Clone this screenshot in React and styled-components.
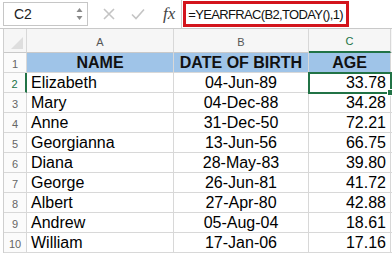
import React from "react";
import styled, { createGlobalStyle, css } from "styled-components";

const GREEN = "#217346";
const GRID = "#d8d8d8";

const GlobalStyle = createGlobalStyle`
  html, body {
    margin: 0;
    padding: 0;
    background: #fff;
    font-family: "Liberation Sans", Arial, sans-serif;
  }
`;

const Window = styled.div`
  width: 392px;
  height: 253px;
  overflow: hidden;
  background: #fff;
`;

const Toolbar = styled.div`
  display: flex;
  align-items: center;
  height: 29px;
  box-sizing: border-box;
  border-bottom: 1px solid #c9c9c9;
`;

const NameBox = styled.div`
  display: flex;
  align-items: center;
  justify-content: space-between;
  width: 85px;
  height: 24px;
  margin-left: 3px;
  box-sizing: border-box;
  border: 1px solid #c6c6c6;
  padding: 0 4px 0 10px;
  font-size: 14px;
  color: #222;
`;

const Spinner = styled.svg`
  width: 7px;
  height: 14px;
`;

const Actions = styled.div`
  display: flex;
  align-items: center;
  gap: 16px;
  padding: 0 6px 0 15px;
  height: 100%;
`;

const Fx = styled.span`
  font-family: "Liberation Serif", "Times New Roman", serif;
  font-style: italic;
  font-size: 17px;
  color: #444;
  margin-left: 2px;
`;

const FormulaField = styled.div`
  flex: 1;
  align-self: stretch;
  display: flex;
  align-items: center;
  padding-left: 1px;
  border-left: 1px solid #d0d0d0;
`;

const Highlight = styled.span`
  display: inline-flex;
  align-items: center;
  height: 26px;
  box-sizing: border-box;
  border: 3px solid #d3141c;
  padding: 0 3px 0 2px;
  font-size: 13px;
  letter-spacing: -0.65px;
  color: #111;
  white-space: nowrap;
`;

const Sheet = styled.div`
  display: grid;
  grid-template-columns: 23px 147px 135px 82px 1fr;
  grid-auto-rows: 20px;
  grid-template-rows: 24px;
  margin-left: 3px;
  border-left: 1px solid #cfcfcf;
`;

const Cell = styled.div`
  position: relative;
  box-sizing: border-box;
  border-right: 1px solid ${GRID};
  border-bottom: 1px solid ${GRID};
  font-size: 16px;
  line-height: 20px;
  color: #000;
  padding: 0 4px;
  white-space: nowrap;
  overflow: visible;
  text-align: ${(p) => p.$align || "left"};
  ${(p) =>
    p.$head &&
    css`
      background: #9fc4e8;
      font-weight: bold;
      text-align: center;
      color: #111;
    `}
  ${(p) =>
    p.$selected &&
    css`
      outline: 2px solid ${GREEN};
      outline-offset: -1px;
      z-index: 2;
      &::after {
        content: "";
        position: absolute;
        right: -4px;
        bottom: -4px;
        width: 5px;
        height: 5px;
        background: ${GREEN};
        border: 1px solid #fff;
      }
    `}
`;

const ColHead = styled.div`
  box-sizing: border-box;
  background: #f6f6f6;
  border-right: 1px solid ${GRID};
  border-bottom: ${(p) => (p.$active ? `2px solid ${GREEN}` : "1px solid #c9c9c9")};
  font-size: 11px;
  color: ${(p) => (p.$active ? GREEN : "#555")};
  display: flex;
  align-items: center;
  justify-content: center;
  padding-top: 2px;
`;

const Corner = styled(ColHead)`
  position: relative;
  &::after {
    content: "";
    position: absolute;
    right: 3px;
    bottom: 3px;
    border-style: solid;
    border-width: 0 0 12px 12px;
    border-color: transparent transparent #dedede transparent;
  }
`;

const RowHead = styled.div`
  box-sizing: border-box;
  background: #fbfbfb;
  border-bottom: 1px solid ${GRID};
  border-right: ${(p) => (p.$active ? `2px solid ${GREEN}` : `1px solid ${GRID}`)};
  font-size: 11px;
  color: ${(p) => (p.$active ? GREEN : "#666")};
  text-align: center;
  line-height: 22px;
`;

const rows = [
  ["Elizabeth", "04-Jun-89", "33.78"],
  ["Mary", "04-Dec-88", "34.28"],
  ["Anne", "31-Dec-50", "72.21"],
  ["Georgianna", "13-Jun-56", "66.75"],
  ["Diana", "28-May-83", "39.80"],
  ["George", "26-Jun-81", "41.72"],
  ["Albert", "27-Apr-80", "42.88"],
  ["Andrew", "05-Aug-04", "18.61"],
  ["William", "17-Jan-06", "17.16"],
];

export default function App() {
  return (
    <Window>
      <GlobalStyle />
      <Toolbar>
        <NameBox>
          C2
          <Spinner viewBox="0 0 7 14">
            <path d="M3.5 1 L6.5 5 L0.5 5 Z" fill="#8a8a8a" />
            <path d="M3.5 13 L6.5 9 L0.5 9 Z" fill="#8a8a8a" />
          </Spinner>
        </NameBox>
        <Actions>
          <svg width="12" height="12" viewBox="0 0 12 12">
            <path d="M1 1 L11 11 M11 1 L1 11" stroke="#c4c4c4" strokeWidth="1.6" />
          </svg>
          <svg width="14" height="12" viewBox="0 0 14 12">
            <path d="M1 6.5 L5 10.5 L13 1.5" stroke="#c4c4c4" strokeWidth="1.6" fill="none" />
          </svg>
          <Fx>fx</Fx>
        </Actions>
        <FormulaField>
          <Highlight>=YEARFRAC(B2,TODAY(),1)</Highlight>
        </FormulaField>
      </Toolbar>
      <Sheet>
        <Corner />
        <ColHead>A</ColHead>
        <ColHead>B</ColHead>
        <ColHead $active>C</ColHead>
        <ColHead />

        <RowHead>1</RowHead>
        <Cell $head>NAME</Cell>
        <Cell $head>DATE OF BIRTH</Cell>
        <Cell $head>AGE</Cell>
        <Cell />

        {rows.map(([name, dob, age], i) => (
          <React.Fragment key={name}>
            <RowHead $active={i === 0}>{i + 2}</RowHead>
            <Cell>{name}</Cell>
            <Cell $align="center">{dob}</Cell>
            <Cell $align="right" $selected={i === 0}>{age}</Cell>
            <Cell />
          </React.Fragment>
        ))}
      </Sheet>
    </Window>
  );
}
